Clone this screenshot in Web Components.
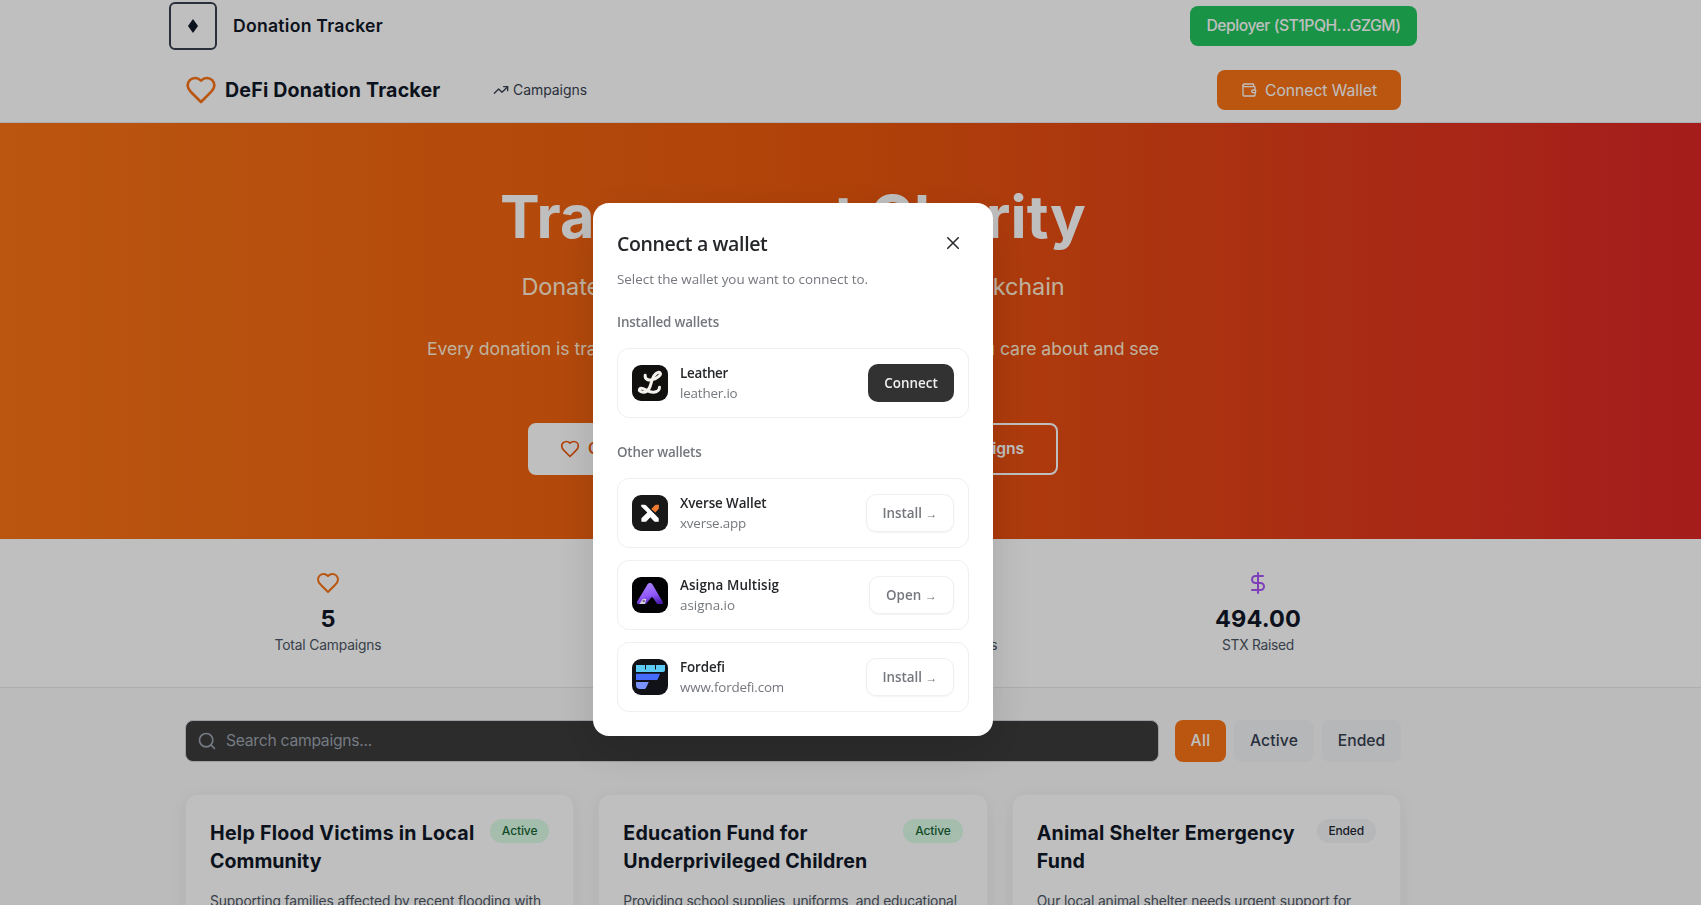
<!DOCTYPE html>
<html lang="en">
<head>
<meta charset="utf-8">
<title>DeFi Donation Tracker</title>
<style>
html,body{margin:0;height:100%;overflow:hidden}
body{font-family:Inter,"Liberation Sans",sans-serif;background:#fafafa;color:#111827}
</style>
</head>
<body>
<donation-app></donation-app>
<wallet-dialog></wallet-dialog>
<script>
const define = (name, render, after) => customElements.define(name, class extends HTMLElement {
  connectedCallback() {
    if (this.shadowRoot) return;
    this.attachShadow({ mode: 'open' }).innerHTML = render(this);
    if (after) after(this);
  }
});

const ICONS = {
  heart: '<path d="M19 14c1.490-1.460 3-3.210 3-5.500A5.500 5.500 0 0 0 16.500 3c-1.760 0-3 .5-4.500 2-1.500-1.500-2.740-2-4.500-2A5.500 5.500 0 0 0 2 8.500c0 2.300 1.500 4.050 3 5.500l7 7Z"/>',
  trend: '<path d="M22 7l-8.500 8.500-5-5L2 17"/><path d="M16 7h6v6"/>',
  wallet: '<path d="M19 7V4a1 1 0 0 0-1-1H5a2 2 0 0 0 0 4h15a1 1 0 0 1 1 1v4h-3a2 2 0 0 0 0 4h3a1 1 0 0 0 1-1v-2a1 1 0 0 0-1-1"/><path d="M3 5v14a2 2 0 0 0 2 2h15a1 1 0 0 0 1-1v-4"/>',
  dollar: '<path d="M12 2v20"/><path d="M17 5H9.500a3.500 3.500 0 0 0 0 7h5a3.500 3.500 0 0 1 0 7H6"/>',
  search: '<circle cx="11" cy="11" r="8"/><path d="m21 21-4.300-4.300"/>',
  users: '<circle cx="9" cy="7" r="4"/><path d="M2 21v-2a4 4 0 0 1 4-4h6a4 4 0 0 1 4 4v2M16 3.100a4 4 0 0 1 0 7.800M22 21v-2a4 4 0 0 0-3-3.900"/>',
  close: '<path d="M1.500 1.500l21 21M22.500 1.500l-21 21"/>'
};
define('line-icon', el => `<style>:host{display:block;flex:none;width:${el.getAttribute('size')}px;height:${el.getAttribute('size')}px}svg{display:block;width:100%;height:100%}</style>
<svg viewBox="0 0 24 24" fill="none" stroke="currentColor" stroke-width="${el.getAttribute('weight') || 2}" stroke-linecap="round" stroke-linejoin="round">${ICONS[el.getAttribute('name')]}</svg>`);

const LOGOS = {
  leather: '<rect width="36" height="36" fill="#12100f"/><path d="M13.200 10.200C12.600 14.200 16.300 15.800 20.600 14.600C25.600 13.200 29.600 9.600 28.100 7.900C26.200 5.900 21.900 9.300 20.200 14.400C18.600 19.300 17.900 26.600 12.200 27.200C8.600 27.500 6.200 25.400 7.900 23.700C10.500 21.400 16 27.700 21.600 27.200C25.200 26.900 27.600 24.700 27.500 22.200" fill="none" stroke="#f5f1ed" stroke-width="3" stroke-linecap="round"/>',
  xverse: '<rect width="36" height="36" fill="#181818"/><path d="M9.200 9.800h3.300c.7 0 1.200.3 1.700.8l12.500 12.600v3.500h-4.200l-4.200-4.400-4.200 4.400H9.400v-3.400l5.900-5.800-6.100-6.100z" fill="#fff"/><path d="M19.300 14l3.300-3.500c.5-.6 1-.8 1.700-.8h2.600v3.200c0 .7-.3 1.200-.8 1.700l-2.700 2.800z" fill="#ee7a30"/>',
  asigna: '<defs><linearGradient id="g" x1=".4" y1="0" x2=".7" y2="1"><stop offset="0" stop-color="#a983ff"/><stop offset=".55" stop-color="#9259fb"/><stop offset="1" stop-color="#4a1cae"/></linearGradient></defs><rect width="36" height="36" fill="#020103"/><path d="M15.300 7.700c1-2.200 4.300-2.200 5.400 0l10 17.400c.7 1.300-.1 2-1.300 2h-4.200l-4.200-6.300c-.6-.8-1.400-.8-2-.1L14 27.100H6.800c-1.700 0-2.500-1-1.600-2.500z" fill="url(#g)"/><path d="M7.400 27l3.500-5.200 3.400.2-1.400 5z" fill="#d8d0e8"/><circle cx="11.800" cy="24" r="1.300" fill="#77737f"/>',
  fordefi: '<rect width="36" height="36" fill="#101217"/><path d="M4 6h29v5a2 2 0 0 1-2 2H4z" fill="#5ccbf5"/><path d="M13.500 6v4.500M23.500 6v4.500" stroke="#101217"/><path d="M4 14.700h24l-1.900 4.700c-.4 1-1 1.500-2 1.500H4z" fill="#456cff"/><path d="M4 23h12.800l-2.600 5.400c-.6 1.200-1.200 1.600-2.500 1.600H8a4 4 0 0 1-4-4z" fill="#7a92fc"/>'
};
define('wallet-logo', el => `<style>:host{display:block;flex:none;width:36px;height:36px;border-radius:9px;overflow:hidden}svg{display:block}</style>
<svg width="36" height="36" viewBox="0 0 36 36">${LOGOS[el.getAttribute('name')]}</svg>`);

define('brand-bar', () => `<style>
:host{display:block;background:#fff;height:58px}
.in{width:1248px;height:52px;margin-left:169px;display:flex;align-items:center;justify-content:space-between}
.l{display:flex;align-items:center;gap:16px}
.logo{box-sizing:border-box;width:48px;height:48px;border:2px solid #374151;border-radius:6px;display:grid;place-items:center}
b{font-weight:600;font-size:17.600px;line-height:26px}
.btn{height:40px;width:227px;border-radius:8px;background:#22c55e;color:#fff;font-weight:500;font-size:15.700px;line-height:39px;text-align:center}
</style><div class="in"><div class="l"><div class="logo"><svg width="10" height="14" viewBox="0 0 10 14"><path d="M5 0l5 7-5 7-5-7z" fill="#111827"/></svg></div><b><fit-text w="150">Donation Tracker</fit-text></b></div><div class="btn"><fit-text w="194">Deployer (ST1PQH…GZGM)</fit-text></div></div>`);

define('nav-bar', () => `<style>
:host{display:block;background:#fff;height:64px;border-bottom:1px solid #e5e7eb}
.in{width:1216px;height:64px;margin-left:185px;display:flex;align-items:center}
.heart{color:#f97316}
b{font-size:19.600px;font-weight:650;margin-left:8px}
a{display:flex;align-items:center;gap:4px;margin-left:52.500px;font-size:14px;line-height:18px;padding-bottom:1px;color:#374151}
.btn{margin-left:auto;height:40px;width:184px;border-radius:8px;background:#f97316;color:#fff;font-size:15.700px;display:flex;align-items:center;justify-content:center;gap:8px}
</style><div class="in"><line-icon class="heart" name="heart" size="32"></line-icon><b><fit-text w="215.500">DeFi Donation Tracker</fit-text></b>
<a><line-icon name="trend" size="16"></line-icon><fit-text w="74">Campaigns</fit-text></a>
<div class="btn"><line-icon name="wallet" size="16"></line-icon><fit-text w="112">Connect Wallet</fit-text></div></div>`);

define('hero-banner', () => `<style>
:host{display:block;height:416px;background:linear-gradient(90deg,#f97316,#ea580c 50%,#dc2626);color:#fff}
.in{width:1586px;display:flex;flex-direction:column;align-items:center;padding-top:63px}
h1{margin:0;font-size:59.500px;line-height:60px;font-weight:750}
.sub{margin-top:25px;font-size:23.500px;line-height:32px;color:#ffedd5}
.p{margin-top:31px;font-size:17.600px;line-height:29px;color:#ffedd5;text-align:center}
.row{display:flex;gap:16px;margin-top:31px;font-weight:600;font-size:15.700px;line-height:20px}
.row div{box-sizing:border-box;height:52px;border-radius:8px;border:2px solid #fff;display:flex;align-items:center;gap:8px;padding:0 30px;width:276px}
.row .a{background:#fff;color:#ea580c}
.row .b{width:238px;padding:0 32px;justify-content:flex-end}
</style><div class="in"><h1><fit-text w="586">Transparent Charity</fit-text></h1>
<div class="sub"><fit-text w="543">Donate with confidence on the Stacks blockchain</fit-text></div>
<div class="p"><fit-text w="732">Every donation is tracked on the blockchain. Support the causes you care about and see</fit-text><br>exactly where your money goes.</div>
<div class="row"><div class="a"><line-icon name="heart" size="20"></line-icon><fit-text w="136">Create Campaign</fit-text></div><div class="b"><fit-text w="145">Browse Campaigns</fit-text></div></div></div>`);

define('stat-item', el => `<style>
:host{display:flex;flex-direction:column;align-items:center}
line-icon{color:${el.getAttribute('color')}}
b{font-size:23.500px;font-weight:700;line-height:32px;margin-top:8px}
span{font-size:13.800px;line-height:20px;color:#4b5563}
</style><line-icon name="${el.getAttribute('icon')}" size="24"></line-icon><b><fit-text w="${el.getAttribute('vw')}">${el.getAttribute('value')}</fit-text></b><span><fit-text w="${el.getAttribute('lw')}"><slot></slot></fit-text></span>`);

define('stats-band', () => `<style>
:host{display:block;background:#fff;height:149px;box-sizing:border-box;border-bottom:1px solid #e5e7eb}
.g{width:1216px;margin-left:185px;padding-top:32px;display:grid;grid-template-columns:repeat(4,1fr);gap:24px}
</style><div class="g"><stat-item icon="heart" color="#f97316" value="5" vw="15" lw="107">Total Campaigns</stat-item>
<stat-item icon="trend" color="#22c55e" value="3" vw="15" lw="72">Active Now</stat-item>
<stat-item icon="users" color="#3b82f6" value="12" vw="28" lw="99">Total Donations</stat-item>
<stat-item icon="dollar" color="#a855f7" value="494.00" vw="86" lw="72">STX Raised</stat-item></div>`);

define('filter-bar', () => `<style>
:host{display:flex;align-items:center;height:42px;margin:32px 0 0 185px;width:1216px;font-size:15.700px;line-height:20px;gap:8px}
.s{box-sizing:border-box;width:974px;height:42px;border:1px solid #d1d5db;border-radius:8px;background:#3b3b3b;display:flex;align-items:center;gap:9px;padding-left:11px;color:#9ca3af;margin-right:8px}
.t{height:42px;border-radius:8px;background:#f3f4f6;color:#374151;display:grid;place-items:center;font-weight:480}
.on{background:#f97316;color:#fff}
</style><div class="s"><line-icon name="search" size="20"></line-icon><fit-text w="146">Search campaigns...</fit-text></div>
<div class="t on" style="width:51px"><fit-text w="20">All</fit-text></div><div class="t" style="width:80px"><fit-text w="48">Active</fit-text></div><div class="t" style="width:79px"><fit-text w="47.500">Ended</fit-text></div>`);

define('campaign-card', el => {
  const live = el.getAttribute('status') === 'Active';
  const tw = el.getAttribute('tw').split(',');
  return `<style>
:host{display:block;box-sizing:border-box;height:400px;background:#fff;border:1px solid #f5f7f8;border-radius:12px;padding:24px;box-shadow:0 4px 16px rgba(0,40,30,.07)}
.h{display:flex;justify-content:space-between;align-items:flex-start}
b{font-size:19.600px;line-height:28px;font-weight:650}
b fit-text{display:block;width:max-content}
i{font-style:normal;font-size:12px;font-weight:480;line-height:24px;width:59.500px;height:24px;border-radius:12px;display:grid;place-items:center;background:${live ? '#dcfce7' : '#f3f4f6'};color:${live ? '#166534' : '#1f2937'}}
p{margin:16px 0 0;font-size:13.800px;line-height:20px;color:#4b5563}
</style><div class="h"><b>${el.getAttribute('heading').split('|').map((t, n) => `<fit-text w="${tw[n]}">${t}</fit-text>`).join('')}</b><i><fit-text w="35.500">${el.getAttribute('status')}</fit-text></i></div>
<p><fit-text w="${el.getAttribute('dw')}"><slot></slot></fit-text></p>`;
});

define('campaign-grid', () => `<style>:host{display:grid;grid-template-columns:repeat(3,1fr);gap:24px;width:1216px;margin:32px 0 0 185px}</style>
<campaign-card heading="Help Flood Victims in Local|Community" tw="264.500,111.500" status="Active" dw="331">Supporting families affected by recent flooding with</campaign-card>
<campaign-card heading="Education Fund for|Underprivileged Children" tw="184.500,244" status="Active" dw="333.500">Providing school supplies, uniforms, and educational</campaign-card>
<campaign-card heading="Animal Shelter Emergency|Fund" tw="258,48.500" status="Ended" dw="314.500">Our local animal shelter needs urgent support for</campaign-card>`);

define('donation-app', () => `<style>:host{display:block;height:905px;overflow:hidden}</style><brand-bar></brand-bar><nav-bar></nav-bar><hero-banner></hero-banner><stats-band></stats-band><filter-bar></filter-bar><campaign-grid></campaign-grid>`);

define('wallet-row', el => {
  const main = el.hasAttribute('primary');
  return `<style>
:host{box-sizing:border-box;display:flex;align-items:center;height:70px;border:1px solid #efeff2;border-radius:12px;padding:0 14px;font-size:13.400px;line-height:20px;color:#74777d}
.n{margin-left:12px;flex:1}
.n div:first-child{font-weight:600;color:#242629}
.b{box-sizing:border-box;height:38px;width:${el.getAttribute('bw')}px;border-radius:10px;display:grid;place-items:center;font-weight:600;${main ? 'background:#323232;color:#efefef' : 'border:1px solid #efeff2;box-shadow:0 1px 2px rgba(0,0,0,.05)'}}
</style><wallet-logo name="${el.getAttribute('logo')}"></wallet-logo><div class="n"><div><fit-text w="${el.getAttribute('nw')}">${el.getAttribute('name')}</fit-text></div><div><fit-text w="${el.getAttribute('uw')}">${el.getAttribute('url')}</fit-text></div></div><div class="b"><fit-text w="${el.getAttribute('aw')}"><slot></slot></fit-text></div>`;
});

define('wallet-dialog', () => `<style>
:host{position:fixed;inset:0;background:rgba(0,0,0,.25);font-family:"Open Sans","Noto Sans",sans-serif;color:#242629}
.m{box-sizing:border-box;width:400px;height:533px;margin:203px 0 0 593px;background:#fff;border-radius:16px;padding:24px;box-shadow:0 14px 44px rgba(0,0,0,.13);display:flow-root}
.t{display:flex;justify-content:space-between;align-items:center;height:33px;font-size:19.500px;font-weight:560;padding-right:10px}
.t line-icon{margin-bottom:1px}
.d{margin-top:9px;font-size:13.400px;line-height:20px;color:#74777d}
.s{margin:23px 0 16px;font-size:13.400px;line-height:20px;font-weight:600;color:#74777d}
.s.o{margin-top:24px}
.l{display:grid;gap:12px}
.ar{font-family:"Liberation Sans",sans-serif;font-size:12px;font-weight:400}
</style><div class="m"><div class="t"><fit-text w="150.500">Connect a wallet</fit-text><line-icon name="close" size="12" weight="3"></line-icon></div>
<div class="d"><fit-text w="251">Select the wallet you want to connect to.</fit-text></div>
<div class="s"><fit-text w="102">Installed wallets</fit-text></div>
<wallet-row primary logo="leather" name="Leather" nw="48" url="leather.io" uw="57.500" bw="86" aw="53.500">Connect</wallet-row>
<div class="s o"><fit-text w="84.500">Other wallets</fit-text></div>
<div class="l"><wallet-row logo="xverse" name="Xverse Wallet" nw="86.500" url="xverse.app" uw="66" bw="88" aw="55">Install <span class="ar">→</span></wallet-row>
<wallet-row logo="asigna" name="Asigna Multisig" nw="99" url="asigna.io" uw="55" bw="85" aw="51">Open <span class="ar">→</span></wallet-row>
<wallet-row logo="fordefi" name="Fordefi" nw="45" url="www.fordefi.com" uw="104" bw="88" aw="55">Install <span class="ar">→</span></wallet-row></div></div>`);

// A single line of text whose tracking is adjusted to fill the width in "w".
define('fit-text', () => '<style>:host{display:inline-block;white-space:nowrap}</style><slot></slot>', el => {
  const text = (el.querySelector('slot') ? el.getRootNode().host : el).textContent.trim();
  const gap = (+el.getAttribute('w') - el.getBoundingClientRect().width) / text.length;
  el.style.letterSpacing = gap.toFixed(3) + 'px';
});
</script>
</body>
</html>
